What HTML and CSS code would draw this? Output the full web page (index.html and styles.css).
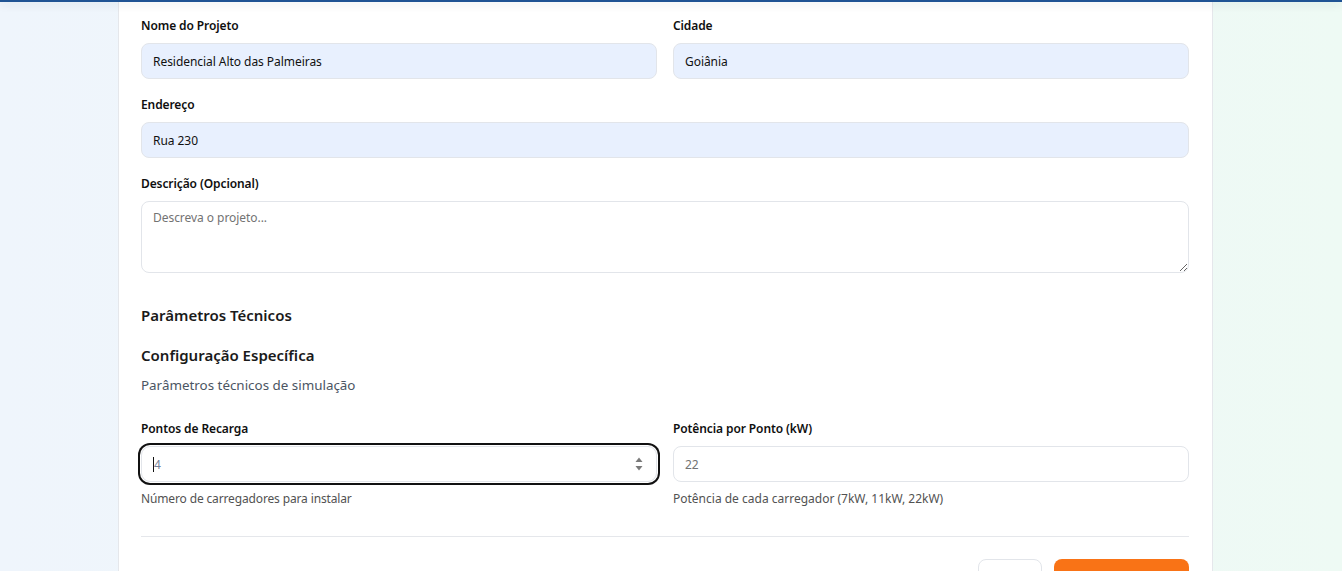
FILE: index.html
```html
<!DOCTYPE html>
<html lang="pt-BR">
<head>
<meta charset="utf-8">
<title>Novo Projeto</title>
<link rel="stylesheet" href="styles.css">
</head>
<body>
<div class="topbar"></div>
<main class="page">
  <section class="card">
    <div class="grid-2">
      <div class="field">
        <label class="label">Nome do Projeto</label>
        <input class="input autofill" type="text" value="Residencial Alto das Palmeiras">
      </div>
      <div class="field">
        <label class="label">Cidade</label>
        <input class="input autofill" type="text" value="Goiânia">
      </div>
    </div>
    <div class="field">
      <label class="label">Endereço</label>
      <input class="input autofill" type="text" value="Rua 230">
    </div>
    <div class="field">
      <label class="label">Descrição (Opcional)</label>
      <textarea class="input textarea" placeholder="Descreva o projeto..."></textarea>
    </div>

    <h3 class="section-title">Parâmetros Técnicos</h3>
    <h4 class="sub-title">Configuração Específica</h4>
    <p class="sub-desc">Parâmetros técnicos de simulação</p>

    <div class="grid-2 params">
      <div class="field">
        <label class="label">Pontos de Recarga</label>
        <div class="input number focused">
          <span class="caret"></span><span class="num-value">4</span>
          <svg class="spin" width="10" height="18" viewBox="0 0 10 18"><path d="M1.5 7 L5 2.5 L8.5 7 Z" fill="#7a7a7a"/><path d="M1.5 11 L5 15.5 L8.5 11 Z" fill="#7a7a7a"/></svg>
        </div>
        <p class="help help-left">Número de carregadores para instalar</p>
      </div>
      <div class="field">
        <label class="label">Potência por Ponto (kW)</label>
        <input class="input" type="text" placeholder="22">
        <p class="help">Potência de cada carregador (7kW, 11kW, 22kW)</p>
      </div>
    </div>

    <div class="divider"></div>
    <div class="actions">
      <button class="btn btn-outline">Voltar</button>
      <button class="btn btn-primary">Salvar Projeto</button>
    </div>
  </section>
</main>
</body>
</html>
```

FILE: styles.css
```css
* { box-sizing: border-box; }
html, body { margin: 0; padding: 0; }
body {
  font-family: "Noto Sans", "Open Sans", Arial, sans-serif;
  background: linear-gradient(90deg, #eff5fc 0%, #eff7f9 50%, #eefaf4 100%);
  color: #111827;
  height: 571px;
  overflow: hidden;
}
.topbar {
  position: fixed;
  top: 0; left: 0; right: 0;
  height: 2px;
  background: #1f5394;
  box-shadow: 0 2px 8px rgba(15, 40, 80, 0.18);
  z-index: 5;
}
.page {
  padding-left: 118px;
}
.card {
  width: 1095px;
  background: #fff;
  border-left: 1px solid #e5e7eb;
  border-right: 1px solid #e5e7eb;
  padding: 15px 23px 40px 22px;
  display: flex;
  flex-direction: column;
  gap: 15px;
}
.grid-2 {
  display: grid;
  grid-template-columns: 1fr 1fr;
  gap: 16px;
}
.field {
  display: flex;
  flex-direction: column;
}
.label {
  font-size: 12px;
  font-weight: 600;
  line-height: 20px;
  padding-top: 1px;
  margin-bottom: 7px;
  color: #0f0f0f;
  letter-spacing: -0.1px;
}
.input {
  height: 36px;
  border: 1px solid #e2e5ea;
  border-radius: 8px;
  padding: 0 11px;
  font-family: inherit;
  font-size: 12px;
  letter-spacing: -0.05px;
  color: #111;
  background: #fff;
  outline: none;
  width: 100%;
}
.input::placeholder { color: #737373; }
.autofill { background: #e8f0fe; }
.textarea {
  height: 72px;
  padding: 7px 11px;
  resize: vertical;
  line-height: 18px;
}
.section-title {
  margin: 15px 0 0 0;
  font-size: 15px;
  font-weight: 600;
  line-height: 24px;
  color: #1a1a1a;
}
.sub-title {
  margin: 1px 0 0 0;
  font-size: 15px;
  font-weight: 600;
  line-height: 24px;
  color: #1a1a1a;
}
.sub-desc {
  margin: -7px 0 0 0;
  font-size: 13.4px;
  line-height: 20px;
  color: #4b5563;
}
.params { margin-top: 8px; }
.number {
  display: flex;
  align-items: center;
}
.focused {
  padding: 0 12px 0 11px;
  box-shadow: 0 0 0 1px #fff, 0 0 0 3px #111;
  border-radius: 9px;
}
.caret {
  width: 1px;
  height: 15px;
  background: #111;
}
.num-value { color: #76829a; }
.spin { margin-left: auto; }
.help {
  margin: 9px 0 0 0;
  font-size: 12px;
  line-height: 16px;
  color: #525252;
}
.help-left { letter-spacing: -0.14px; }
.divider {
  height: 1px;
  background: #e5e7eb;
  margin-top: 14px;
}
.actions {
  display: flex;
  justify-content: flex-end;
  gap: 12px;
  margin-top: 7px;
}
.btn {
  height: 40px;
  border-radius: 8px;
  font-family: inherit;
  font-size: 13px;
  font-weight: 500;
  padding: 0;
}
.btn-outline {
  width: 64px;
  background: #fff;
  border: 1px solid #e2e5ea;
  color: #111;
}
.btn-primary {
  width: 135px;
  background: #f97316;
  border: none;
  color: #fff;
}
```
